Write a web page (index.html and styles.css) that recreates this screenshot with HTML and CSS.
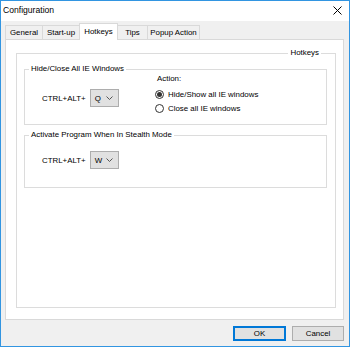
FILE: index.html
```html
<!DOCTYPE html>
<html lang="en">
<head>
    <meta charset="UTF-8">
    <title>Configuration</title>
    <link rel="stylesheet" href="styles.css">
</head>
<body>
    <div class="window">
        <div class="titlebar">
            <span class="title">Configuration</span>
            <svg class="close" width="9" height="9" viewBox="0 0 9 9">
                <path d="M0.5 0.5 L8.5 8.5 M8.5 0.5 L0.5 8.5" stroke="#000" stroke-width="1" fill="none"/>
            </svg>
        </div>

        <div class="tabs">
            <div class="tab tab-general">General</div>
            <div class="tab tab-startup">Start-up</div>
            <div class="tab tab-hotkeys active">Hotkeys</div>
            <div class="tab tab-tips">Tips</div>
            <div class="tab tab-popup">Popup Action</div>
        </div>

        <div class="panel">
            <fieldset class="frame">
                <legend class="frame-label">Hotkeys</legend>

                <fieldset class="group">
                    <legend>Hide/Close All IE Windows</legend>
                    <div class="group-body">
                        <div class="hotkey">
                            <span>CTRL+ALT+</span>
                            <div class="combo">
                                <span>Q</span>
                                <svg width="7" height="4" viewBox="0 0 7 4"><path d="M0.5 0.5 L3.5 3.5 L6.5 0.5" stroke="#555" fill="none"/></svg>
                            </div>
                        </div>
                        <div class="action">
                            <div class="action-label">Action:</div>
                            <label class="radio checked"><span class="dot"></span>Hide/Show all IE windows</label>
                            <label class="radio"><span class="dot"></span>Close all IE windows</label>
                        </div>
                    </div>
                </fieldset>

                <fieldset class="group group-stealth">
                    <legend>Activate Program When In Stealth Mode</legend>
                    <div class="group-body">
                        <div class="hotkey">
                            <span>CTRL+ALT+</span>
                            <div class="combo">
                                <span>W</span>
                                <svg width="7" height="4" viewBox="0 0 7 4"><path d="M0.5 0.5 L3.5 3.5 L6.5 0.5" stroke="#555" fill="none"/></svg>
                            </div>
                        </div>
                    </div>
                </fieldset>
            </fieldset>
        </div>

        <div class="footer">
            <button class="btn btn-default">OK</button>
            <button class="btn">Cancel</button>
        </div>
    </div>
</body>
</html>
```

FILE: styles.css
```css
* {
    margin: 0;
    padding: 0;
    box-sizing: border-box;
}

body {
    font-family: 'Liberation Sans', Arial, sans-serif;
    font-size: 7.9px;
    color: #000;
    background: #fff;
    width: 350px;
    height: 347px;
    overflow: hidden;
}

.window {
    width: 350px;
    height: 347px;
    border: 1px solid #3295e1;
    background: #f0f0f0;
    display: flex;
    flex-direction: column;
}

.titlebar {
    height: 20px;
    background: #fff;
    display: flex;
    align-items: center;
    justify-content: space-between;
    padding: 0 7px 2px 2px;
}

.title {
    font-size: 8.6px;
}

.close {
    display: block;
}

/* tab strip */
.tabs {
    margin-top: 2px;
    height: 16px;
    padding-left: 4px;
    display: flex;
    align-items: flex-end;
}

.tab {
    height: 14px;
    border: 1px solid #d9d9d9;
    border-bottom: none;
    background: #f0f0f0;
    display: flex;
    align-items: center;
    justify-content: center;
    margin-left: -1px;
    padding-bottom: 1px;
}

.tab-general { width: 38px; margin-left: 0; }
.tab-startup { width: 38px; }
.tab-hotkeys { width: 39px; }
.tab-tips    { width: 31px; }
.tab-popup   { width: 53px; }

.tab.active {
    position: relative;
    z-index: 1;
    height: 17px;
    margin-bottom: -1px;
    background: #fff;
    padding-bottom: 2px;
}

/* tab page */
.panel {
    height: 281px;
    margin: 0 5px 0 4px;
    background: #fff;
    border: 1px solid #d9d9d9;
    padding: 8px 7px 11px 10px;
    display: flex;
    flex-direction: column;
}

fieldset {
    border: 1px solid #dcdcdc;
    min-width: 0;
}

legend {
    line-height: 10px;
    padding: 0 2px;
}

.frame {
    flex: 1;
    padding: 6px 8px 0 7px;
}

.frame-label {
    margin-left: auto;
    margin-right: 6px;
}

.group {
    padding: 0 0 9px 0;
}

.group legend {
    margin-left: 4px;
}

.group-stealth {
    margin-top: 5px;
    padding-bottom: 18px;
}

.group-body {
    display: flex;
}

.hotkey {
    width: 130px;
    padding-left: 17px;
    margin-top: 15px;
    height: 18px;
    display: flex;
    align-items: center;
    gap: 4px;
}

.group-stealth .hotkey {
    margin-top: 11px;
}

.combo {
    width: 29px;
    height: 18px;
    border: 1px solid #adadad;
    background: #e1e1e1;
    display: flex;
    align-items: center;
    justify-content: space-between;
    padding: 0 5px 0 4px;
}

.combo svg {
    display: block;
}

.action-label {
    line-height: 10px;
    margin-left: 2px;
}

.action .radio:first-of-type {
    margin-top: 3px;
}

.radio {
    height: 14px;
    display: flex;
    align-items: center;
    gap: 4px;
}

.dot {
    width: 9px;
    height: 9px;
    border: 1px solid #333;
    border-radius: 50%;
    background: #fff;
    display: flex;
    align-items: center;
    justify-content: center;
}

.radio.checked .dot::after {
    content: "";
    width: 5px;
    height: 5px;
    border-radius: 50%;
    background: #333;
}

/* dialog buttons */
.footer {
    display: flex;
    justify-content: flex-end;
    gap: 6px;
    padding: 6px 5px 0 0;
}

.btn {
    font-family: inherit;
    font-size: inherit;
    color: #000;
    height: 15px;
    width: 52px;
    background: #e1e1e1;
    border: 1px solid #adadad;
}

.btn-default {
    width: 53px;
    border-color: #0078d7;
    box-shadow: inset 0 0 0 1px #0078d7;
}
```
